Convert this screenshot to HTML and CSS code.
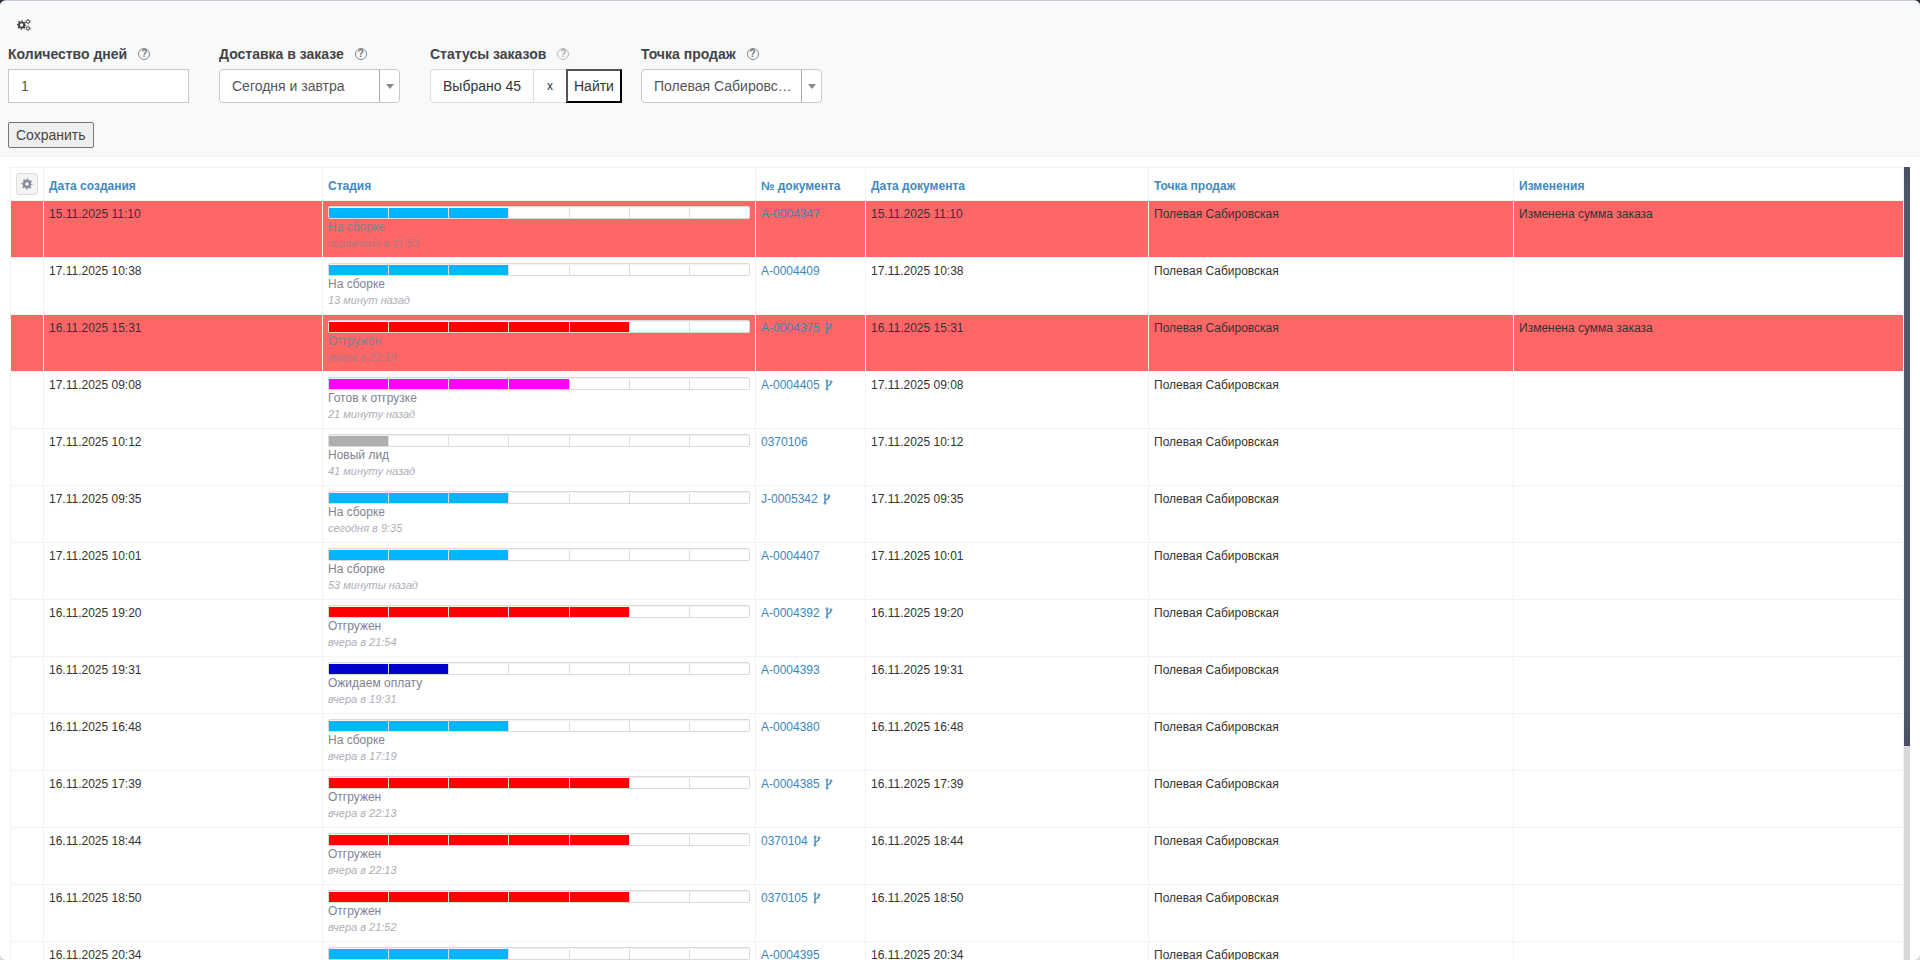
FILE: index.html
```html
<!DOCTYPE html>
<html lang="ru">
<head>
    <meta charset="UTF-8">
    <meta name="viewport" content="width=device-width, initial-scale=1.0">
    <title>Заказы</title>
    <link rel="stylesheet" href="styles.css">
</head>
<body>
    <div class="page">
        <form class="filters" id="filtersForm">
            <button type="button" class="gears-btn" aria-label="Настройки">
                <svg width="14" height="12" viewBox="0 0 14 12">
                    <circle cx="4.6" cy="6" r="2.6" fill="none" stroke="#444" stroke-width="1.9"/>
                    <circle cx="4.6" cy="6" r="4" fill="none" stroke="#444" stroke-width="1.4" stroke-dasharray="1.6 1.54" stroke-dashoffset="0.8"/>
                    <circle cx="11" cy="2.6" r="1.6" fill="none" stroke="#444" stroke-width="1"/>
                    <circle cx="11" cy="2.6" r="2.3" fill="none" stroke="#444" stroke-width="0.8" stroke-dasharray="0.9 1.51"/>
                    <circle cx="11" cy="9.4" r="1.6" fill="none" stroke="#444" stroke-width="1"/>
                    <circle cx="11" cy="9.4" r="2.3" fill="none" stroke="#444" stroke-width="0.8" stroke-dasharray="0.9 1.51"/>
                </svg>
            </button>

            <div class="filters-row">
                <div class="field">
                    <div class="field-label">
                        <label for="days">Количество дней</label>
                        <span class="help">?</span>
                    </div>
                    <input type="text" id="days" class="control" value="1">
                </div>
                <div class="field">
                    <div class="field-label">
                        <label for="delivery">Доставка в заказе</label>
                        <span class="help">?</span>
                    </div>
                    <div class="select-wrap">
                        <select id="delivery" class="control">
                            <option>Сегодня и завтра</option>
                        </select>
                    </div>
                </div>
                <div class="field">
                    <div class="field-label">
                        <label for="statuses">Статусы заказов</label>
                        <span class="help help-light">?</span>
                    </div>
                    <div class="status-group">
                        <button type="button" id="statuses" class="status-btn">Выбрано 45</button>
                        <button type="button" class="status-clear">x</button>
                        <button type="button" class="find-btn">Найти</button>
                    </div>
                </div>
                <div class="field">
                    <div class="field-label">
                        <label for="shop">Точка продаж</label>
                        <span class="help">?</span>
                    </div>
                    <div class="select-wrap">
                        <select id="shop" class="control">
                            <option>Полевая Сабировская</option>
                        </select>
                    </div>
                </div>
            </div>

            <button type="submit" class="save-btn">Сохранить</button>
        </form>

        <div class="list">
            <div class="list-body">
                <table class="orders">
                    <colgroup>
                        <col class="col-tools">
                        <col class="col-created">
                        <col class="col-stage">
                        <col class="col-number">
                        <col class="col-date">
                        <col class="col-shop">
                        <col>
                    </colgroup>
                    <thead>
                        <tr>
                            <th>
                                <button type="button" class="cog-btn" aria-label="Колонки">
                                    <svg width="12" height="12" viewBox="0 0 12 12">
                                        <circle cx="6" cy="6" r="3" fill="none" stroke="#888c9b" stroke-width="2.4"/>
                                        <circle cx="6" cy="6" r="4.7" fill="none" stroke="#888c9b" stroke-width="1.6" stroke-dasharray="1.9 1.79" stroke-dashoffset="0.9"/>
                                    </svg>
                                </button>
                            </th>
                            <th>Дата создания</th>
                            <th>Стадия</th>
                            <th>№ документа</th>
                            <th>Дата документа</th>
                            <th>Точка продаж</th>
                            <th>Изменения</th>
                        </tr>
                    </thead>
                    <tbody id="ordersBody"></tbody>
                </table>
            </div>
            <div class="scroll-rail">
                <div class="scroll-thumb"></div>
            </div>
        </div>
    </div>

    <script src="script.js"></script>
</body>
</html>
```

FILE: styles.css
```css
* {
    box-sizing: border-box;
}

html {
    background: linear-gradient(#2b2d42 50%, #d5d5d5 50%);
}

body {
    margin: 0;
    font-family: Arial, "Liberation Sans", sans-serif;
    font-size: 12px;
    line-height: 17px;
    color: #333;
}

button,
input,
select {
    font-family: inherit;
    margin: 0;
}

.page {
    display: flex;
    flex-direction: column;
    height: 100vh;
    overflow: hidden;
    background: #fff;
    border-top: 1px solid #c8c9d3;
    border-radius: 6px;
}

/* filters */
.filters {
    padding: 16px 8px 8px;
    background: #f8f9fb;
    border-bottom: 1px solid #f2f3f5;
    border-radius: 0 0 4px 4px;
    font-size: 14px;
    line-height: 20px;
}

.gears-btn {
    display: flex;
    padding: 2px 9px;
    border: none;
    background: none;
}

.filters-row {
    display: grid;
    grid-template-columns: repeat(4, 181px);
    gap: 30px;
    margin: 11px 0 19px;
}

.field-label {
    display: flex;
    align-items: center;
    gap: 11px;
    height: 20px;
    margin-bottom: 5px;
    font-weight: bold;
    color: #444;
    white-space: nowrap;
}

.help {
    width: 12px;
    height: 12px;
    border: 1px solid #888;
    border-radius: 50%;
    font-size: 10px;
    line-height: 10px;
    text-align: center;
    color: #777;
}

.help-light {
    border-color: #bbb;
    color: #aaa;
}

.control {
    display: block;
    width: 100%;
    height: 34px;
    padding: 6px 12px;
    border: 1px solid #c8c8c8;
    background: #fff;
    font-size: 14px;
    color: #555;
}

.select-wrap {
    position: relative;
}

.select-wrap .control {
    appearance: none;
    padding-right: 26px;
    border-radius: 4px;
    text-overflow: ellipsis;
}

.select-wrap::before {
    content: "";
    position: absolute;
    top: 1px;
    right: 20px;
    width: 1px;
    height: 32px;
    background: #aaa;
}

.select-wrap::after {
    content: "";
    position: absolute;
    top: 15px;
    right: 6px;
    border: 4px solid transparent;
    border-top: 5px solid #888;
    border-bottom: none;
}

.status-group {
    display: flex;
    height: 34px;
}

.status-group button {
    flex: none;
}

.status-btn,
.status-clear {
    border: 1px solid #ddd;
    background: #fff;
    color: #333;
    white-space: nowrap;
}

.status-btn {
    padding: 0 12px;
    border-radius: 4px 0 0 4px;
    font-size: 14px;
}

.status-clear {
    width: 32px;
    padding: 0;
    border-width: 1px 0;
    font-size: 12px;
}

.find-btn {
    padding: 0 6px;
    border: 2px outset #000;
    background: #fff;
    font-size: 14px;
    color: #333;
}

.save-btn {
    height: 26px;
    padding: 0 7px;
    border: 1px solid #767676;
    border-radius: 2px;
    background: #efefef;
    font-size: 14px;
    color: #444;
}

/* orders list */
.list {
    display: flex;
    flex: 1;
    min-height: 0;
    padding: 10px 10px 0;
}

.list-body {
    flex: 1;
    overflow: hidden;
}

.scroll-rail {
    width: 6px;
    background: #d9d9d9;
}

.scroll-thumb {
    height: 73%;
    background: linear-gradient(#474e66, #50576b 5%, #50576b 95%, #474e66);
}

.orders {
    width: 100%;
    table-layout: fixed;
    border-collapse: collapse;
}

.col-tools {
    width: 33px;
}

.col-created {
    width: 279px;
}

.col-stage {
    width: 433px;
}

.col-number {
    width: 110px;
}

.col-date {
    width: 283px;
}

.col-shop {
    width: 365px;
}

.orders th,
.orders td {
    padding: 5px;
    border: 1px solid #f2f2f2;
    text-align: left;
}

.orders th {
    vertical-align: bottom;
    color: #3f8abf;
}

.orders td {
    vertical-align: top;
}

.orders .changed td {
    background: #f66;
}

.orders a {
    color: #3a87bd;
    text-decoration: none;
}

.cog-btn {
    display: flex;
    align-items: center;
    justify-content: center;
    width: 22px;
    height: 22px;
    padding: 0;
    border: 1px solid #ddd;
    border-radius: 3px;
    background: #f4f4f4;
}

.fork {
    margin-left: 5px;
    vertical-align: -2px;
}

.bar {
    display: flex;
    height: 13px;
    padding-top: 1px;
    border: 1px solid #d9d9d9;
    border-radius: 2px;
    background: #f2f2f2;
}

.bar span {
    flex: 1;
    border-left: 1px solid #ddd;
    background: #fff;
}

.bar span:first-child {
    border-left: none;
}

.bar .assembly {
    background: #00b7ff;
}

.bar .shipped {
    background: #f00;
}

.bar .ready {
    background: #f0f;
}

.bar .lead {
    background: #afafaf;
}

.bar .payment {
    background: #00c;
}

.stage-name {
    color: #808391;
}

.stage-time {
    padding-bottom: 2px;
    font-size: 11px;
    line-height: 14px;
    font-style: italic;
    color: #808391;
    opacity: 0.65;
}
```

FILE: script.js
```js
const SHOP = 'Полевая Сабировская';
const STEPS = 7;

const stages = {
    lead: { name: 'Новый лид', step: 1 },
    payment: { name: 'Ожидаем оплату', step: 2 },
    assembly: { name: 'На сборке', step: 3 },
    ready: { name: 'Готов к отгрузке', step: 4 },
    shipped: { name: 'Отгружен', step: 5 }
};

const orders = [
    { date: '15.11.2025 11:10', stage: 'assembly', time: 'позавчера в 11:53', number: 'A-0004347', changes: 'Изменена сумма заказа' },
    { date: '17.11.2025 10:38', stage: 'assembly', time: '13 минут назад', number: 'A-0004409' },
    { date: '16.11.2025 15:31', stage: 'shipped', time: 'вчера в 22:19', number: 'A-0004375', fork: true, changes: 'Изменена сумма заказа' },
    { date: '17.11.2025 09:08', stage: 'ready', time: '21 минуту назад', number: 'A-0004405', fork: true },
    { date: '17.11.2025 10:12', stage: 'lead', time: '41 минуту назад', number: '0370106' },
    { date: '17.11.2025 09:35', stage: 'assembly', time: 'сегодня в 9:35', number: 'J-0005342', fork: true },
    { date: '17.11.2025 10:01', stage: 'assembly', time: '53 минуты назад', number: 'A-0004407' },
    { date: '16.11.2025 19:20', stage: 'shipped', time: 'вчера в 21:54', number: 'A-0004392', fork: true },
    { date: '16.11.2025 19:31', stage: 'payment', time: 'вчера в 19:31', number: 'A-0004393' },
    { date: '16.11.2025 16:48', stage: 'assembly', time: 'вчера в 17:19', number: 'A-0004380' },
    { date: '16.11.2025 17:39', stage: 'shipped', time: 'вчера в 22:13', number: 'A-0004385', fork: true },
    { date: '16.11.2025 18:44', stage: 'shipped', time: 'вчера в 22:13', number: '0370104', fork: true },
    { date: '16.11.2025 18:50', stage: 'shipped', time: 'вчера в 21:52', number: '0370105', fork: true },
    { date: '16.11.2025 20:34', stage: 'assembly', time: 'вчера в 20:34', number: 'A-0004395' }
];

const forkIcon = `
    <svg class="fork" width="8" height="12" viewBox="0 0 8 12" fill="none" stroke="#3a87bd">
        <path d="M2 2v8M2 8C2 6 6 7 6 3.5" stroke-width="1.3"/>
        <circle cx="2" cy="1.8" r="1"/>
        <circle cx="2" cy="10.2" r="1"/>
        <circle cx="6" cy="2.8" r="1"/>
    </svg>`;

function renderBar(stage) {
    let html = '';
    for (let i = 0; i < STEPS; i++) {
        html += `<span class="${i < stages[stage].step ? stage : ''}"></span>`;
    }
    return `<div class="bar">${html}</div>`;
}

function renderRow(order) {
    return `
        <tr class="${order.changes ? 'changed' : ''}">
            <td></td>
            <td>${order.date}</td>
            <td>
                ${renderBar(order.stage)}
                <div class="stage-name">${stages[order.stage].name}</div>
                <div class="stage-time">${order.time}</div>
            </td>
            <td><a href="#">${order.number}</a>${order.fork ? forkIcon.trim() : ''}</td>
            <td>${order.date}</td>
            <td>${SHOP}</td>
            <td>${order.changes || ''}</td>
        </tr>`;
}

document.getElementById('ordersBody').innerHTML = orders.map(renderRow).join('');

document.getElementById('filtersForm').addEventListener('submit', (e) => {
    e.preventDefault();
});
```
